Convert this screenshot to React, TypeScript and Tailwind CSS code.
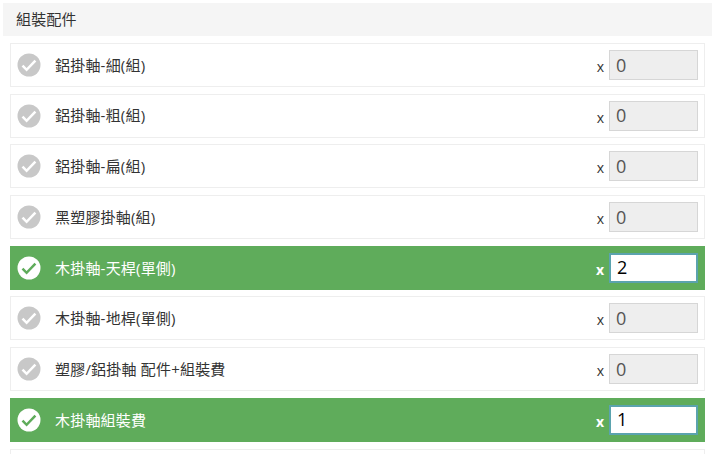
import React from "react";

const rows = [
  { label: "鋁掛軸-細(組)", value: "0", on: false },
  { label: "鋁掛軸-粗(組)", value: "0", on: false },
  { label: "鋁掛軸-扁(組)", value: "0", on: false },
  { label: "黑塑膠掛軸(組)", value: "0", on: false },
  { label: "木掛軸-天桿(單側)", value: "2", on: true },
  { label: "木掛軸-地桿(單側)", value: "0", on: false },
  { label: "塑膠/鋁掛軸 配件+組裝費", value: "0", on: false },
  { label: "木掛軸組裝費", value: "1", on: true },
  { label: "", value: "", on: false },
];

function Check({ on }: { on: boolean }) {
  return (
    <svg width="24" height="24" viewBox="0 0 24 24" className="shrink-0">
      <circle cx="12" cy="12" r="11.5" fill={on ? "#ffffff" : "#c8c8c8"} />
      <path
        d="M5.5 12.6 L9.6 16.8 L18.4 7.6"
        fill="none"
        stroke={on ? "#5fac5b" : "#ffffff"}
        strokeWidth="2.5"
      />
    </svg>
  );
}

export default function App() {
  return (
    <div className="h-[454px] w-[715px] overflow-hidden bg-white pl-[3px] pr-[3px] pt-[3px] font-['Open_Sans','Noto_Sans_CJK_TC',sans-serif]">
      <div className="flex h-[33px] items-center bg-[#f5f5f5] pl-[13px] text-[15px] tracking-[0.2px] text-[#333]">
        組裝配件
      </div>
      <div className="flex flex-col gap-[6.7px] pl-[7px] pr-[7px] pt-[7px]">
        {rows.map((r, i) => (
          <div
            key={i}
            className={`flex h-[44px] shrink-0 items-center border pl-[6px] pr-[6px] ${
              r.on ? "border-[#5fac5b] bg-[#5fac5b] text-white" : "border-[#eeeeee] bg-white text-[#333]"
            }`}
          >
            {r.label && <Check on={r.on} />}
            <span className="ml-[14px] flex-1 text-[15px] tracking-[0.2px]">{r.label}</span>
            {r.label && (
              <>
                <span className={`mt-[3px] mr-[5px] text-[14px] ${r.on ? "font-bold" : ""}`}>x</span>
                <div
                  className={`flex h-[30px] w-[89px] items-center border pl-[6px] text-[18px] ${
                    r.on
                      ? "border-2 border-[#5ba3ae] bg-white text-black"
                      : "border-[#d6d6d6] bg-[#eeeeee] text-[#555]"
                  }`}
                >
                  {r.value}
                </div>
              </>
            )}
          </div>
        ))}
      </div>
    </div>
  );
}
